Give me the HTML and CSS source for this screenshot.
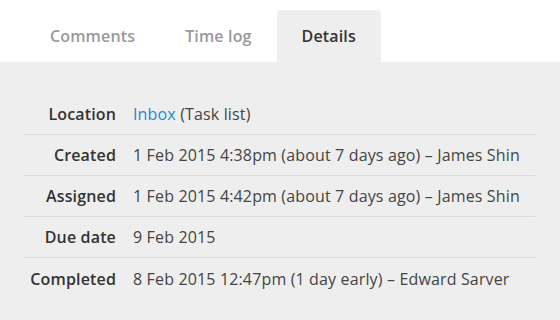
FILE: index.html
```html
<!DOCTYPE html>
<html lang="en">
<head>
    <meta charset="UTF-8">
    <meta name="viewport" content="width=device-width, initial-scale=1.0">
    <title>Task details</title>
    <link rel="stylesheet" href="styles.css">
</head>
<body>
    <div class="tabs">
        <div class="tab">Comments</div>
        <div class="tab">Time log</div>
        <div class="tab active">Details</div>
    </div>

    <div class="panel">
        <div class="details">
            <div class="row">
                <div class="label">Location</div>
                <div class="value"><a href="#">Inbox</a> (Task list)</div>
            </div>
            <div class="row">
                <div class="label">Created</div>
                <div class="value">1 Feb 2015 4:38pm (about 7 days ago) – James Shin</div>
            </div>
            <div class="row">
                <div class="label">Assigned</div>
                <div class="value">1 Feb 2015 4:42pm (about 7 days ago) – James Shin</div>
            </div>
            <div class="row">
                <div class="label">Due date</div>
                <div class="value">9 Feb 2015</div>
            </div>
            <div class="row">
                <div class="label">Completed</div>
                <div class="value">8 Feb 2015 12:47pm (1 day early) – Edward Sarver</div>
            </div>
        </div>
    </div>
</body>
</html>
```

FILE: styles.css
```css
* {
    margin: 0;
    padding: 0;
    box-sizing: border-box;
}

body {
    font-family: 'Open Sans', 'Noto Sans', sans-serif;
    font-size: 16px;
    letter-spacing: 0.15px;
    color: #444;
    background: #eee;
    height: 320px;
    overflow: hidden;
}

.tabs {
    display: flex;
    background: white;
    padding: 10px 0 0 25px;
    height: 62px;
}

.tab {
    padding: 0 25px;
    height: 52px;
    line-height: 53px;
    color: #999;
    font-weight: 600;
    border-radius: 4px 4px 0 0;
}

.tab.active {
    background: #eee;
    color: #333;
}

.panel {
    padding: 32px 25px 0 24px;
}

.row {
    display: grid;
    grid-template-columns: 92px 1fr;
    column-gap: 17px;
    height: 41px;
    align-items: center;
    border-bottom: 1px solid #ddd;
}

.row:last-child {
    border-bottom: none;
}

.label {
    text-align: right;
    font-weight: 600;
    color: #333;
}

.value a {
    color: #1a8ad4;
    text-decoration: none;
}
```
